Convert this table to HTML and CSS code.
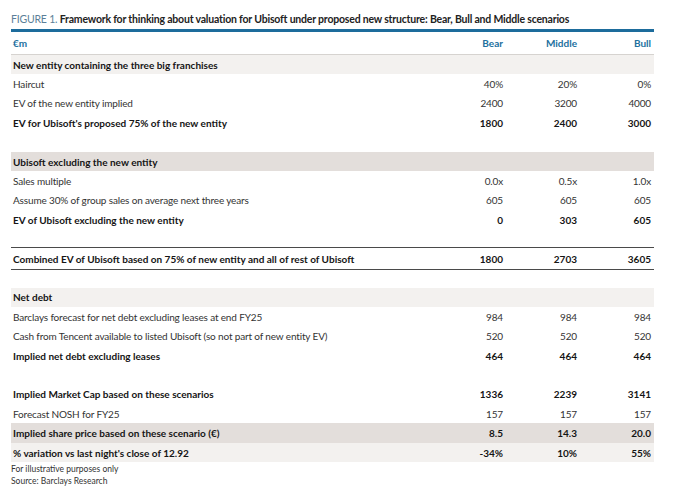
FILE: index.html
```html
<!DOCTYPE html>
<html>
<head>
<meta charset="utf-8">
<link rel="stylesheet" href="styles.css">
</head>
<body>
<div class="figure">
  <div class="title"><span class="fig">FIGURE 1.</span> Framework for thinking about valuation for Ubisoft under proposed new structure: Bear, Bull and Middle scenarios</div>
  <div class="table">
    <div class="row head"><div class="lab">€m</div><div class="num">Bear</div><div class="num">Middle</div><div class="num">Bull</div></div>
    <div class="row sec light"><div class="lab">New entity containing the three big franchises</div><div class="num"></div><div class="num"></div><div class="num"></div></div>
    <div class="row"><div class="lab">Haircut</div><div class="num">40%</div><div class="num">20%</div><div class="num">0%</div></div>
    <div class="row"><div class="lab">EV of the new entity implied</div><div class="num">2400</div><div class="num">3200</div><div class="num">4000</div></div>
    <div class="row b"><div class="lab">EV for Ubisoft's proposed 75% of the new entity</div><div class="num">1800</div><div class="num">2400</div><div class="num">3000</div></div>
    <div class="row blank"></div>
    <div class="row sec dark"><div class="lab">Ubisoft excluding the new entity</div><div class="num"></div><div class="num"></div><div class="num"></div></div>
    <div class="row"><div class="lab">Sales multiple</div><div class="num">0.0x</div><div class="num">0.5x</div><div class="num">1.0x</div></div>
    <div class="row"><div class="lab">Assume 30% of group sales on average next three years</div><div class="num">605</div><div class="num">605</div><div class="num">605</div></div>
    <div class="row b"><div class="lab">EV of Ubisoft excluding the new entity</div><div class="num">0</div><div class="num">303</div><div class="num">605</div></div>
    <div class="row blank short"></div>
    <div class="row b combined"><div class="lab">Combined EV of Ubisoft based on 75% of new entity and all of rest of Ubisoft</div><div class="num">1800</div><div class="num">2703</div><div class="num">3605</div></div>
    <div class="row blank short"></div>
    <div class="row sec light"><div class="lab">Net debt</div><div class="num"></div><div class="num"></div><div class="num"></div></div>
    <div class="row"><div class="lab">Barclays forecast for net debt excluding leases at end FY25</div><div class="num">984</div><div class="num">984</div><div class="num">984</div></div>
    <div class="row"><div class="lab">Cash from Tencent available to listed Ubisoft (so not part of new entity EV)</div><div class="num">520</div><div class="num">520</div><div class="num">520</div></div>
    <div class="row b"><div class="lab">Implied net debt excluding leases</div><div class="num">464</div><div class="num">464</div><div class="num">464</div></div>
    <div class="row blank"></div>
    <div class="row b"><div class="lab">Implied Market Cap based on these scenarios</div><div class="num">1336</div><div class="num">2239</div><div class="num">3141</div></div>
    <div class="row"><div class="lab">Forecast NOSH for FY25</div><div class="num">157</div><div class="num">157</div><div class="num">157</div></div>
    <div class="row b dark"><div class="lab">Implied share price based on these scenario (€)</div><div class="num">8.5</div><div class="num">14.3</div><div class="num">20.0</div></div>
    <div class="row b light"><div class="lab">% variation vs last night's close of 12.92</div><div class="num">-34%</div><div class="num">10%</div><div class="num">55%</div></div>
  </div>
  <div class="notes">
    <div>For illustrative purposes only</div>
    <div>Source: Barclays Research</div>
  </div>
</div>
</body>
</html>
```
FILE: styles.css
```css
html, body {
  margin: 0;
  padding: 0;
  background: #ffffff;
}
body {
  font-family: Lato, "Liberation Sans", sans-serif;
  color: #333333;
}
.figure {
  padding: 12px 0 0 11px;
  width: 643px;
}
.title {
  font-size: 10.5px;
  letter-spacing: -0.2px;
  line-height: 14px;
  font-weight: 700;
  color: #222222;
  white-space: nowrap;
  height: 17px;
}
.title .fig {
  font-weight: 400;
  color: #5b7f98;
}
.table {
  border-top: 3px solid #1d6c9c;
}
.row {
  display: grid;
  grid-template-columns: 421px 74px 74px 74px;
  height: 19.4px;
  align-items: center;
  font-size: 10px;
  letter-spacing: -0.15px;
}
.row > div {
  white-space: nowrap;
}
.lab {
  padding-left: 2px;
}
.num {
  text-align: right;
  padding-right: 3px;
}
.head {
  height: 22px;
  border-bottom: 1px solid #d6d3d0;
  color: #22709e;
  font-weight: 700;
  letter-spacing: 0;
}
.sec,
.b {
  font-weight: 700;
  color: #151515;
  letter-spacing: 0;
}
.light {
  background: #f3f1ef;
}
.dark {
  background: #e3dedb;
}
.blank.short {
  height: 17.8px;
}
.combined {
  box-sizing: border-box;
  height: 22.6px;
  border-top: 1.5px solid #4a4a4a;
  border-bottom: 1.5px solid #4a4a4a;
}
.notes {
  font-size: 8.5px;
  line-height: 12px;
  color: #333333;
  padding-top: 1px;
}
```
